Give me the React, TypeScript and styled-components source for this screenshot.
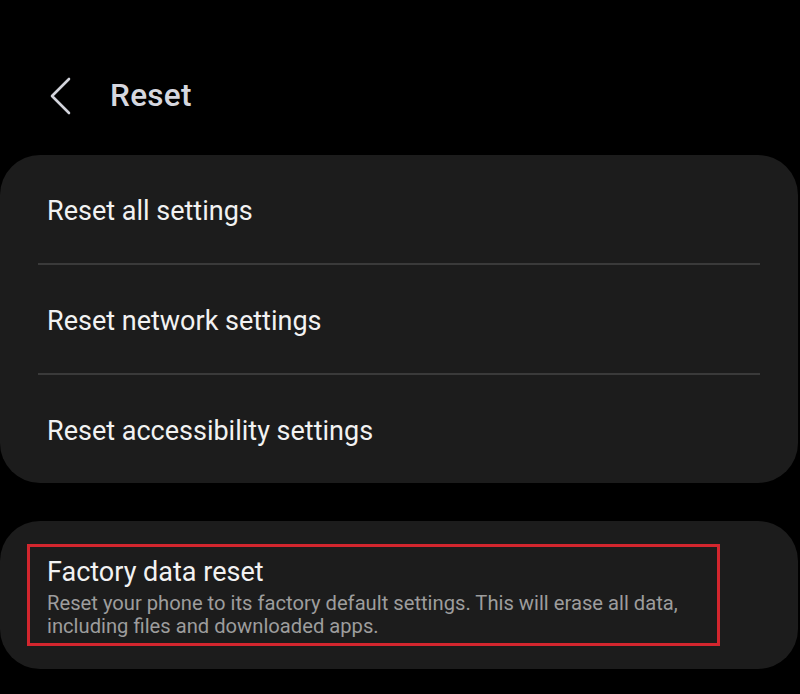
import React from 'react';
import styled, { createGlobalStyle } from 'styled-components';

const GlobalStyle = createGlobalStyle`
  html, body {
    margin: 0;
    padding: 0;
    background: #000;
  }
  body {
    font-family: Roboto, "Noto Sans", sans-serif;
    -webkit-font-smoothing: antialiased;
  }
`;

const Screen = styled.div`
  width: 800px;
  height: 694px;
  background: #000;
  overflow: hidden;
  display: flex;
  flex-direction: column;
`;

const Header = styled.header`
  height: 155px;
  box-sizing: border-box;
  display: flex;
  align-items: center;
  gap: 38px;
  padding: 36px 0 0 48px;
`;

const BackButton = styled.button`
  width: 24px;
  height: 40px;
  padding: 0;
  border: none;
  background: none;
  display: flex;
  align-items: center;
  justify-content: center;
  cursor: pointer;
`;

const Title = styled.h1`
  margin: 0;
  font-size: 31.5px;
  font-weight: 500;
  color: #d6d7df;
  letter-spacing: 0.3px;
`;

const Card = styled.section`
  background: #1c1c1c;
  border-radius: 40px;
  margin-right: 2px;
`;

const Row = styled.div`
  height: 108px;
  box-sizing: border-box;
  display: flex;
  align-items: center;
  padding: 4px 47px 0;
`;

const RowLabel = styled.span`
  font-size: 27px;
  color: #f2f2f2;
`;

const Divider = styled.div`
  height: 2px;
  background: #3a3a3a;
  margin: 0 38px;
`;

const FactoryCard = styled(Card)`
  margin-top: 38px;
  height: 148px;
  box-sizing: border-box;
  padding: 23px 78px 0 27px;
`;

const Highlight = styled.div`
  border: 3px solid #d3262e;
  padding: 9px 17px 5px;
`;

const ItemTitle = styled.div`
  font-size: 27px;
  color: #f2f2f2;
  line-height: 32px;
`;

const ItemSummary = styled.div`
  font-size: 20.2px;
  line-height: 23px;
  color: #9d9d9d;
  margin-top: 4px;
`;

const settings = ['Reset all settings', 'Reset network settings', 'Reset accessibility settings'];

export default function App() {
  return (
    <>
      <GlobalStyle />
      <Screen>
        <Header>
          <BackButton aria-label="Back">
            <svg width="24" height="40" viewBox="0 0 24 40">
              <path d="M21 3 L4 20 L21 37" fill="none" stroke="#d2d3db" strokeWidth="2.6" strokeLinecap="round" strokeLinejoin="round" />
            </svg>
          </BackButton>
          <Title>Reset</Title>
        </Header>
        <Card>
          {settings.map((s, i) => (
            <React.Fragment key={s}>
              {i > 0 && <Divider />}
              <Row>
                <RowLabel>{s}</RowLabel>
              </Row>
            </React.Fragment>
          ))}
        </Card>
        <FactoryCard>
          <Highlight>
            <ItemTitle>Factory data reset</ItemTitle>
            <ItemSummary>
              Reset your phone to its factory default settings. This will erase all data,
              <br />
              including files and downloaded apps.
            </ItemSummary>
          </Highlight>
        </FactoryCard>
      </Screen>
    </>
  );
}
